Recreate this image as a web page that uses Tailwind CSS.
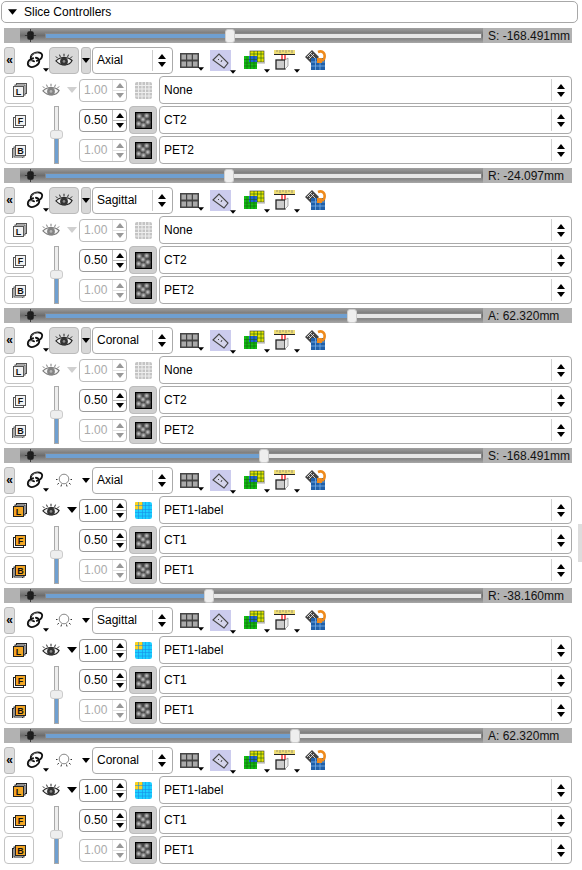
<!DOCTYPE html>
<html lang="en">
<head>
    <meta charset="UTF-8">
    <title>Slice Controllers</title>
    <script src="https://cdn.jsdelivr.net/npm/@tailwindcss/browser@4"></script>
</head>
<body class="bg-white w-[582px] h-[870px] overflow-hidden relative font-['Liberation_Sans',Arial,sans-serif] text-[12px] text-black">
    <!-- Shared icons -->
    <svg class="absolute w-0 h-0" width="0" height="0">
        <defs>
            <radialGradient id="dot"><stop offset="0" stop-color="#cfcfcf"/><stop offset="1" stop-color="#cfcfcf" stop-opacity="0"/></radialGradient>
            <symbol id="down" viewBox="0 0 10 6"><path d="M0 0h10L5 6z" fill="#000"/></symbol>
            <symbol id="sun" viewBox="0 0 14 14"><rect x="3.500" y="2.500" width="7" height="9" rx="2" fill="#1c1c1c"/><path d="M7 0v14M1 7h12" stroke="#222" stroke-width=".8"/></symbol>
            <symbol id="link" viewBox="0 0 20 22"><g fill="none" stroke-linecap="round"><g stroke="#111" stroke-width="2"><path d="M9 12.500C4 11.500 4 6 9 3.500c4-2 9-1 9 2.500 0 3-3 5.500-6 6"/><path d="M11 8.500c5 1 5 6 0 9-4 2.500-9 1.500-9-2.500 0-3 3-5 6-6"/></g><path d="M6 6.500C7 4.500 10 3 13 3" stroke="#999" stroke-width=".8"/><path d="M4 15c.5-2 2-3.500 4-4.500" stroke="#999" stroke-width=".8"/></g></symbol>
            <symbol id="eye" viewBox="0 0 20 16"><path d="M1 8.500C5 4 14 3 19 8c-3 6-12 7-18 .5z" fill="#eee" stroke="#222" stroke-width="1.200"/><circle cx="10" cy="9" r="4.300" fill="#333"/><circle cx="10" cy="9" r="1.500" fill="#888"/><path d="M3 5.500L1 3.500M6 4L5 1.500M10 3.500V.5M14 4l1-2.500M17 5.500l2-2" stroke="#222" stroke-width="1.100"/></symbol>
            <symbol id="eyeoff" viewBox="0 0 16 14"><circle cx="8" cy="6" r="4.800" fill="#fff" stroke="#888"/><path d="M1.500 6.500H0M2.800 10L1.500 11.500M5.500 11.500L5 13.500M10.500 11.500l.5 2M13.200 10l1.300 1.500M14.500 6.500H16" stroke="#333"/></symbol>
            <symbol id="up2" viewBox="0 0 10 6"><path d="M0 6h10L5 0z" fill="#000"/></symbol>
            <symbol id="checker" viewBox="0 0 16 16"><rect width="16" height="16" fill="#000"/><rect x="1" y="1" width="14" height="14" fill="#444"/><g fill="url(#dot)"><circle cx="4" cy="4" r="3"/><circle cx="11" cy="3.500" r="3"/><circle cx="7.500" cy="7" r="3"/><circle cx="3.500" cy="11" r="3"/><circle cx="12" cy="9.500" r="3"/><circle cx="8" cy="12.500" r="3"/></g></symbol>
            <symbol id="graygrid" viewBox="0 0 17 17"><rect width="17" height="17" rx="2" fill="#c4c4c4"/><path d="M3.500 0v17M7 0v17M10.500 0v17M14 0v17M0 3.500h17M0 7h17M0 10.500h17M0 14h17" stroke="#eee"/></symbol>
            <symbol id="labelgrid" viewBox="0 0 17 17"><rect width="17" height="17" rx="2" fill="#1fd0ff"/><rect width="8" height="8" rx="1" fill="#ffd21c"/><path d="M3.500 0v17M7.500 0v17M10.500 0v17M14 0v17M0 3.500h17M0 7.500h17M0 10.500h17M0 14h17" stroke="#1a8fe8" stroke-width=".6"/></symbol>
            <symbol id="layout" viewBox="0 0 19 15"><rect width="19" height="15" fill="#444"/><g fill="#aaa"><rect x="1.500" y="1.500" width="4.500" height="5"/><rect x="7.200" y="1.500" width="4.500" height="5"/><rect x="13" y="1.500" width="4.500" height="5"/><rect x="1.500" y="8.500" width="4.500" height="5"/><rect x="7.200" y="8.500" width="4.500" height="5"/><rect x="13" y="8.500" width="4.500" height="5"/></g></symbol>
            <symbol id="plane" viewBox="0 0 21 21"><rect width="21" height="21" fill="#ccccee"/><path d="M3 10l6-6 9 9-4 5z" fill="#d4d4ea" stroke="#444" stroke-width="1.100"/><path d="M8 9l1 1M11 12l1-2" stroke="#444"/></symbol>
            <symbol id="overlay" viewBox="0 0 22 20"><rect x="7" y="1" width="14" height="11" fill="#e6e600" stroke="#333" stroke-width=".6"/><rect x="1" y="6" width="13" height="13" fill="#12c012"/><rect x="6" y="6" width="8" height="6" fill="#1c5fd8"/><path d="M4 6v13M7.500 6v13M11 1v18M14.500 1v11M18 1v11M1 9.500h13M1 13h13M1 16h13M7 4h14M14 8h7" stroke="#1a5a1a" stroke-width=".6"/><path d="M14 13h8v-6" stroke="#aaa" fill="none"/></symbol>
            <symbol id="ruler" viewBox="0 0 21 20"><rect x="0" y="0" width="21" height="4" fill="#eedd77"/><path d="M0 4.500h21" stroke="#222"/><path d="M3 0v2M6 0v3M9 0v2M12 0v3M15 0v2M18 0v3" stroke="#666" stroke-width=".6"/><path d="M8 5v6M11 5v7" stroke="#e00" stroke-width="1.200"/><rect x="2" y="10" width="9" height="9" fill="#ccc" stroke="#222" stroke-width="1.300"/><path d="M11 10l3-2v8l-3 3" fill="#eee" stroke="#777" stroke-width=".6"/></symbol>
            <symbol id="volume" viewBox="0 0 21 21"><path d="M0 7l7-7 7 7-7 7z" fill="#444"/><path d="M2 7l5-5M4 9l5-5M5 3l5 5M3 5l5 5" stroke="#eee" stroke-width=".8"/><rect x="6" y="8" width="14" height="12" fill="#1f5fa8"/><path d="M10.500 8v12M15 8v12M6 12h14M6 16h14" stroke="#7ab0e8" stroke-width=".8"/><path d="M13 2c5-2 8 2 6 7l-2 2" fill="none" stroke="#ee8a1c" stroke-width="2.600"/><rect x="12" y="8" width="5" height="5" fill="#ee8a1c"/></symbol>
        </defs>
    </svg>

    <!-- Header -->
    <div class="ml-[1px] mt-[1px] w-[577px] h-[22px] border border-[#a8a8a8] rounded-[5px] flex items-center pl-[6px] bg-white">
        <svg class="w-[9px] h-[6px] mr-[7px]"><use href="#down"/></svg>
        <span class="text-[12px]">Slice Controllers</span>
    </div>

    <main id="controllers" class="mt-[5px]"></main>

    <!-- Scrollbar sliver on the right edge -->
    <div class="absolute left-[578px] top-[524px] w-[4px] h-[38px] bg-[#dddddd]"></div>

    <script>
        var blocks = [
            { pos: 230, label: "S: -168.491mm", view: "Axial", on: true, fg: "CT2", bg: "PET2" },
            { pos: 229, label: "R: -24.097mm", view: "Sagittal", on: true, fg: "CT2", bg: "PET2" },
            { pos: 352, label: "A: 62.320mm", view: "Coronal", on: true, fg: "CT2", bg: "PET2" },
            { pos: 264, label: "S: -168.491mm", view: "Axial", on: false, fg: "CT1", bg: "PET1" },
            { pos: 209, label: "R: -38.160mm", view: "Sagittal", on: false, fg: "CT1", bg: "PET1" },
            { pos: 295, label: "A: 62.320mm", view: "Coronal", on: false, fg: "CT1", bg: "PET1" }
        ];

        function icon(id, cls) {
            return '<svg class="' + cls + '"><use href="#' + id + '"/></svg>';
        }

        function toolIcon(id, size) {
            return '<div class="relative ' + size + '">' + icon(id, 'w-full h-full block') +
                '<svg class="absolute right-[-5px] bottom-[-3px] w-[6px] h-[4px]"><use href="#down"/></svg></div>';
        }

        function spin(value, off) {
            var box = off ? 'border-[#bbbbbb] text-[#aaaaaa]' : 'border-[#999999] text-black';
            var upDim = off ? 'opacity-40' : '';
            return '<div class="w-[48px] h-[23px] border rounded-[4px] flex items-center bg-white ' + box + '">' +
                '<span class="w-[33px] pl-[4px] text-[12px]">' + value + '</span>' +
                '<div class="w-[14px] h-full border-l border-[#bbbbbb] flex flex-col items-center justify-center gap-[2px] ' + upDim + '">' +
                icon('up2', 'w-[8px] h-[5px]') + '<div class="w-full h-px bg-[#bbbbbb]"></div>' + icon('down', 'w-[8px] h-[5px]') + '</div></div>';
        }

        function combo(text) {
            return '<div class="w-[413px] h-[28px] border border-[#aaaaaa] rounded-[4px] flex items-center bg-white pl-[4px] text-[12px]">' +
                '<span class="flex-1">' + text + '</span>' +
                '<div class="w-px h-[22px] bg-[#d0d0d0] mr-[4px]"></div>' +
                '<div class="w-[10px] mr-[5px] flex flex-col items-center gap-[3px]">' + icon('up2', 'w-[8px] h-[5px]') + icon('down', 'w-[8px] h-[5px]') + '</div></div>';
        }

        // front square sits bottom-left for L, top-right for F and B
        function layerBtn(letter, on) {
            var fill = on ? '#f5a623' : '#f2f2f2';
            var stroke = on ? '#222' : '#555';
            var squares = letter === 'L'
                ? [[5, 1], [3.500, 2.500], [2, 4]]
                : letter === 'F' ? [[2, 5], [4, 3]] : [[1, 6], [2.500, 4.500], [4, 3]];
            var body = '';
            squares.forEach(function (s, i) {
                var front = i === squares.length - 1;
                body += '<rect x="' + (s[0] + .5) + '" y="' + (s[1] + .5) + '" width="10" height="10" fill="' + (front ? fill : '#fff') + '" stroke="' + stroke + '"/>';
                if (front) {
                    body += '<text x="' + (s[0] + 5.5) + '" y="' + (s[1] + 9) + '" text-anchor="middle" font-size="9" font-weight="bold" fill="#111">' + letter + '</text>';
                }
            });
            return '<div class="w-[30px] h-[28px] border border-[#c4c4c4] rounded-[4px] flex items-center justify-center bg-white">' +
                '<svg width="16" height="16" viewBox="0 0 16 16" fill="none">' + body + '</svg></div>';
        }

        function pressed(id) {
            return '<div class="w-[28px] h-[28px] rounded-[4px] bg-[#cfcfcf] border border-[#bbbbbb] flex items-center justify-center">' +
                icon(id, 'w-[17px] h-[17px]') + '</div>';
        }

        var html = '';
        blocks.forEach(function (b) {
            var fill = b.pos - 45;
            var eyeBtn = b.on
                ? '<div class="w-[30px] h-[27px] rounded-[4px] bg-[#d8d8d8] border border-[#bbbbbb] flex items-center justify-center">' + icon('eye', 'w-[18px] h-[15px]') + '</div>' +
                  '<div class="ml-[2px] w-[10px] h-[27px] rounded-[3px] bg-[#d8d8d8] border border-[#bbbbbb] flex items-center justify-center">' + icon('down', 'w-[8px] h-[5px]') + '</div>'
                : '<div class="w-[30px] h-[27px] flex items-center justify-center">' + icon('eyeoff', 'w-[16px] h-[14px]') + '</div>' +
                  '<div class="ml-[2px] w-[10px] h-[27px] flex items-center justify-center">' + icon('down', 'w-[8px] h-[5px]') + '</div>';

            html += '<section class="h-[140px]">' +
                // slice offset bar
                '<div class="ml-[4px] w-[568px] h-[15px] bg-[#b2b2b2] flex items-center">' +
                    '<div class="ml-[16px] w-[463px] h-full bg-gradient-to-b from-[#a0a0a0] via-[#6c6c6c] to-[#a8a8a8] flex items-center relative">' +
                        '<div class="w-[25px] flex justify-center">' + icon('sun', 'w-[13px] h-[13px] -ml-[4px]') + '</div>' +
                        '<div class="relative w-[437px] h-[6px] bg-[#e6e6e6] border border-[#888888]">' +
                            '<div class="h-full bg-[#6f9fd0]" style="width:' + fill + 'px"></div>' +
                            '<div class="absolute top-[-5px] w-[10px] h-[14px] rounded-[3px] bg-[#eeeeee] border border-[#cccccc]" style="left:' + (fill - 6) + 'px"></div>' +
                        '</div>' +
                    '</div>' +
                    '<span class="ml-[5px] text-[12px] text-[#111] whitespace-nowrap">' + b.label + '</span>' +
                '</div>' +
                // toolbar
                '<div class="mt-[3px] ml-[4px] h-[28px] flex items-center">' +
                    '<div class="w-[11px] h-[27px] rounded-[3px] bg-[#dddddd] border border-[#bbbbbb] flex items-center justify-center text-[12px] font-bold leading-none">«</div>' +
                    '<div class="relative w-[18px] h-[20px] ml-[11px] mr-[5px]">' + icon('link', 'w-[18px] h-[20px] block') +
                        '<svg class="absolute right-[-5px] bottom-[-2px] w-[6px] h-[4px]"><use href="#down"/></svg></div>' +
                    eyeBtn +
                    '<div class="ml-[1px] w-[81px] h-[27px] border border-[#aaaaaa] rounded-[4px] bg-white flex items-center pl-[4px]">' +
                        '<span class="flex-1 text-[12px]">' + b.view + '</span>' +
                        '<div class="w-px h-[21px] bg-[#cccccc] mr-[4px]"></div>' +
                        '<div class="w-[10px] mr-[5px] flex flex-col items-center gap-[3px]">' + icon('up2', 'w-[8px] h-[5px]') + icon('down', 'w-[8px] h-[5px]') + '</div>' +
                    '</div>' +
                    '<div class="ml-[7px]">' + toolIcon('layout', 'w-[19px] h-[15px]') + '</div>' +
                    '<div class="ml-[11px]">' + toolIcon('plane', 'w-[21px] h-[21px]') + '</div>' +
                    '<div class="ml-[12px]">' + toolIcon('overlay', 'w-[22px] h-[20px]') + '</div>' +
                    '<div class="ml-[9px]">' + toolIcon('ruler', 'w-[21px] h-[20px]') + '</div>' +
                    '<div class="ml-[10px]">' + icon('volume', 'w-[21px] h-[21px] block') + '</div>' +
                '</div>' +
                // layer rows
                '<div class="mt-[2px] ml-[4px] flex">' +
                    '<div class="w-[30px] flex flex-col gap-[2px]">' +
                        layerBtn('L', !b.on) + layerBtn('F', !b.on) + layerBtn('B', !b.on) +
                    '</div>' +
                    '<div class="w-[45px]">' +
                        '<div class="h-[28px] flex items-center pl-[8px] ' + (b.on ? 'opacity-60' : '') + '">' +
                            icon('eye', 'w-[18px] h-[15px]') +
                            '<svg class="ml-[7px] w-[10px] h-[6px] ' + (b.on ? 'opacity-30' : '') + '"><use href="#down"/></svg>' +
                        '</div>' +
                        '<div class="relative ml-[20px] mt-[2px] w-[5px] h-[58px] border border-[#aaaaaa] bg-[#eeeeee]">' +
                            '<div class="absolute left-0 right-0 bottom-0 h-[24px] bg-[#6f9fd0]"></div>' +
                            '<div class="absolute left-[-5px] top-[23px] w-[13px] h-[9px] rounded-[3px] bg-[#eeeeee] border border-[#cccccc]"></div>' +
                        '</div>' +
                    '</div>' +
                    '<div class="flex flex-col gap-[2px]">' +
                        '<div class="h-[28px] flex items-center">' + spin('1.00', b.on) +
                            '<div class="w-[32px] flex justify-center">' + icon(b.on ? 'graygrid' : 'labelgrid', 'w-[17px] h-[17px]') + '</div>' + combo(b.on ? 'None' : 'PET1-label') + '</div>' +
                        '<div class="h-[28px] flex items-center">' + spin('0.50', false) +
                            '<div class="w-[32px] flex justify-center">' + pressed('checker') + '</div>' + combo(b.fg) + '</div>' +
                        '<div class="h-[28px] flex items-center">' + spin('1.00', true) +
                            '<div class="w-[32px] flex justify-center">' + pressed('checker') + '</div>' + combo(b.bg) + '</div>' +
                    '</div>' +
                '</div>' +
            '</section>';
        });
        document.getElementById('controllers').innerHTML = html;
    </script>
</body>
</html>
